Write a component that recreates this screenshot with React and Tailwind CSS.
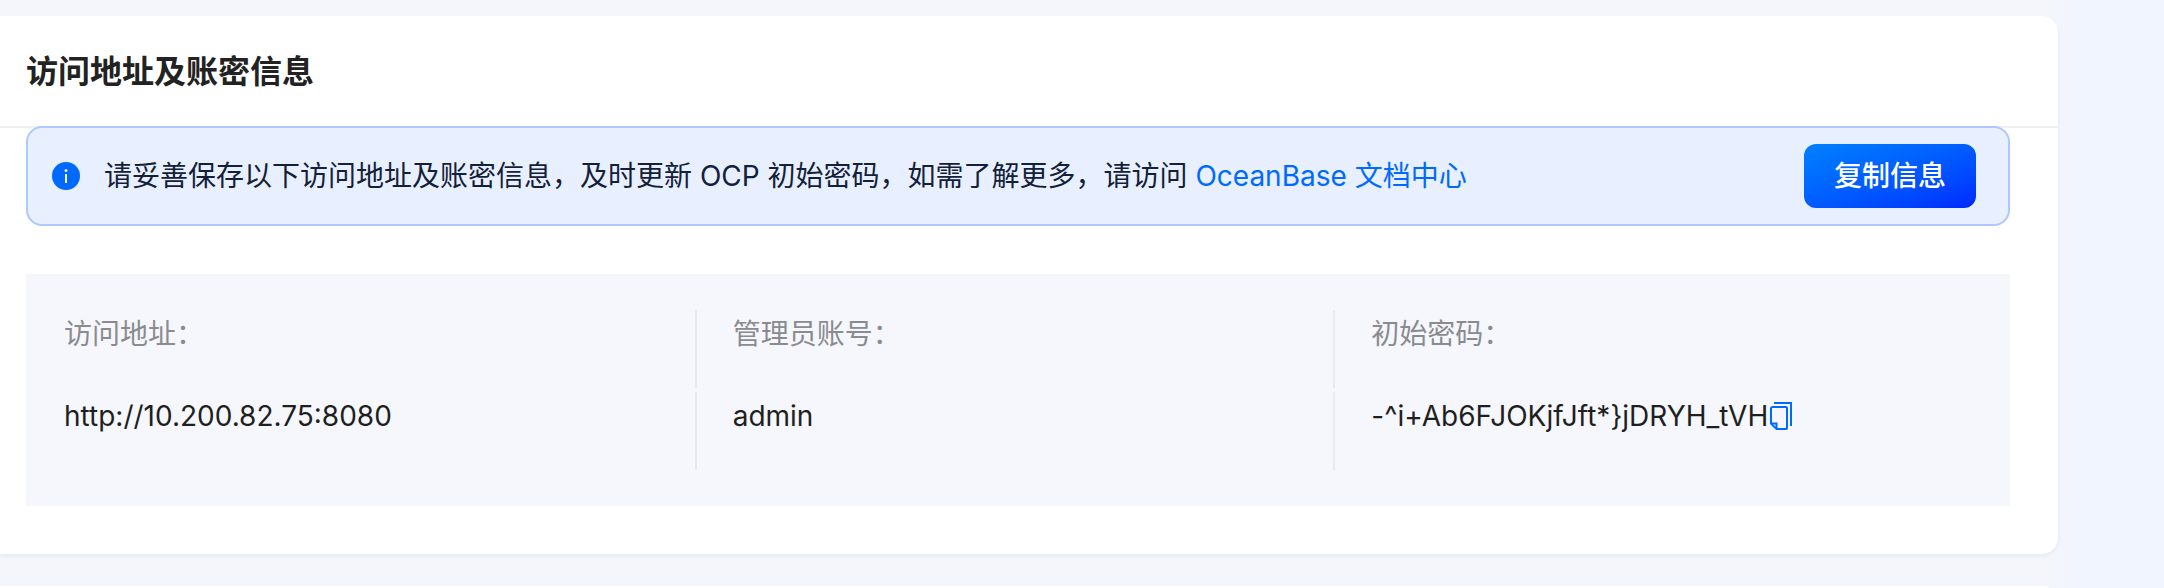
import React from "react";

const credentials = [
  { label: "访问地址：", value: "http://10.200.82.75:8080" },
  { label: "管理员账号：", value: "admin" },
  { label: "初始密码：", value: "-^i+Ab6FJOKjfJft*}jDRYH_tVH", copyable: true },
];

const InfoIcon = () => (
  <svg viewBox="0 0 28 28" className="w-7 h-7 shrink-0" aria-hidden="true">
    <circle cx="14" cy="14" r="14" fill="#006aff" />
    <circle cx="14" cy="8.6" r="1.4" fill="#fff" />
    <rect x="13" y="12" width="2" height="9" fill="#fff" />
  </svg>
);

const CopyIcon = () => (
  <svg viewBox="0 0 22 28" className="w-[22px] h-7" fill="none" stroke="#006aff" strokeWidth="2" aria-hidden="true">
    <path d="M4 1H21V24" />
    <path d="M2.5 5H16A1 1 0 0 1 17 6V26A1 1 0 0 1 16 27H6.5L1 21.5V6.5A1.5 1.5 0 0 1 2.5 5Z" />
    <path d="M1 21.5H6.5V27" />
  </svg>
);

const App = () => {
  return (
    <div className="h-screen overflow-hidden bg-linear-to-r from-[#f5f6fb] from-94% to-[#f1f5ff] to-96% pt-4 text-[28px] font-['Inter','Noto_Sans_CJK_SC',sans-serif]">
      <section className="mr-[106px] rounded-r-2xl bg-white pb-12 shadow-[0_2px_4px_rgba(0,0,0,0.06)]">
        <header className="border-b-2 border-[#f0f0f0] px-[26px] pt-8 pb-[30px]">
          <h2 className="text-[32px] leading-12 font-semibold text-[#222222]">访问地址及账密信息</h2>
        </header>

        <div className="-mt-0.5 pl-[26px] pr-12">
          <div className="flex items-center rounded-2xl border-2 border-[#adc8ff] bg-[#e8f0ff] py-4 pl-6 pr-8">
            <InfoIcon />
            <p className="ml-6 flex-1 leading-12 text-[#132039]">
              请妥善保存以下访问地址及账密信息，及时更新 OCP 初始密码，如需了解更多，请访问{" "}
              <a href="#docs" className="text-[#006aff]">OceanBase 文档中心</a>
            </p>
            <button
              type="button"
              className="h-16 rounded-xl bg-linear-to-br from-[#0080ff] to-[#0025ff] px-[30px] font-medium text-white"
            >
              复制信息
            </button>
          </div>

          <div className="mt-12 bg-[#f5f7fc] p-8">
            <table className="w-full table-fixed border-separate border-spacing-1 text-left leading-12">
              <thead>
                <tr>
                  {credentials.map((item) => (
                    <th
                      key={item.label}
                      scope="col"
                      className="h-[78px] border-r-2 border-[#e6e8ed] pl-8 align-top font-normal text-[#8a8b8e] first:pl-0.5 last:border-r-0"
                    >
                      {item.label}
                    </th>
                  ))}
                </tr>
              </thead>
              <tbody>
                <tr>
                  {credentials.map((item) => (
                    <td
                      key={item.label}
                      className="h-[78px] border-r-2 border-[#e6e8ed] pl-8 align-top text-[#1f1f1f] first:pl-0.5 last:border-r-0"
                    >
                      <div className="flex items-center">
                        {item.value}
                        {item.copyable && (
                          <button type="button" aria-label="复制" className="ml-0.5">
                            <CopyIcon />
                          </button>
                        )}
                      </div>
                    </td>
                  ))}
                </tr>
              </tbody>
            </table>
          </div>
        </div>
      </section>

      <section className="mt-8 mr-[106px] h-16 rounded-r-2xl bg-white" />
    </div>
  );
};

export default App;
